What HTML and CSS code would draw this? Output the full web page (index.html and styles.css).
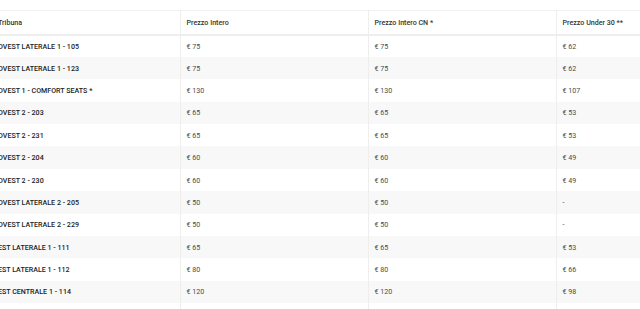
FILE: index.html
```html
<!DOCTYPE html>
<html>
<head>
<meta charset="utf-8">
<link rel="stylesheet" href="styles.css">
</head>
<body>
<div class="wrap">
<table class="prices">
<thead>
<tr><th>Tribuna</th><th>Prezzo Intero</th><th>Prezzo Intero CN *</th><th>Prezzo Under 30 **</th></tr>
</thead>
<tbody>
<tr><td class="name">OVEST LATERALE 1 - 105</td><td>€ 75</td><td>€ 75</td><td>€ 62</td></tr>
<tr><td class="name">OVEST LATERALE 1 - 123</td><td>€ 75</td><td>€ 75</td><td>€ 62</td></tr>
<tr><td class="name">OVEST 1 - COMFORT SEATS *</td><td>€ 130</td><td>€ 130</td><td>€ 107</td></tr>
<tr><td class="name">OVEST 2 - 203</td><td>€ 65</td><td>€ 65</td><td>€ 53</td></tr>
<tr><td class="name">OVEST 2 - 231</td><td>€ 65</td><td>€ 65</td><td>€ 53</td></tr>
<tr><td class="name">OVEST 2 - 204</td><td>€ 60</td><td>€ 60</td><td>€ 49</td></tr>
<tr><td class="name">OVEST 2 - 230</td><td>€ 60</td><td>€ 60</td><td>€ 49</td></tr>
<tr><td class="name">OVEST LATERALE 2 - 205</td><td>€ 50</td><td>€ 50</td><td>-</td></tr>
<tr><td class="name">OVEST LATERALE 2 - 229</td><td>€ 50</td><td>€ 50</td><td>-</td></tr>
<tr><td class="name">EST LATERALE 1 - 111</td><td>€ 65</td><td>€ 65</td><td>€ 53</td></tr>
<tr><td class="name">EST LATERALE 1 - 112</td><td>€ 80</td><td>€ 80</td><td>€ 66</td></tr>
<tr><td class="name">EST CENTRALE 1 - 114</td><td>€ 120</td><td>€ 120</td><td>€ 98</td></tr>
<tr><td class="name">EST CENTRALE 1 - 115</td><td>€ 120</td><td>€ 120</td><td>€ 98</td></tr>
</tbody>
</table>
</div>
</body>
</html>
```
FILE: styles.css
```css
html, body {
  margin: 0;
  padding: 0;
  background: #ffffff;
  overflow: hidden;
}
.wrap {
  padding-top: 10px;
  margin-left: -8px;
}
.prices {
  border-collapse: collapse;
  table-layout: fixed;
  width: 752px;
  font-family: Roboto, "Liberation Sans", sans-serif;
  font-size: 7.1px;
  color: #4a4a4a;
}
.prices th, .prices td {
  width: 188px;
  text-align: left;
  padding: 0 0 0 6px;
  border-left: 1px solid #eeeeee;
  box-sizing: border-box;
  white-space: nowrap;
}
.prices th:first-child, .prices td:first-child {
  border-left: none;
}
.prices thead tr {
  height: 24px;
  border-top: 1px solid #f2f2f2;
  border-bottom: 2px solid #eeeeee;
}
.prices th {
  font-weight: 500;
  color: #333333;
}
.prices tbody tr {
  height: 22.4px;
}
.prices tbody tr:nth-child(even) {
  background: #f8f8f8;
}
.prices td.name {
  font-weight: 500;
  color: #222222;
}
```
